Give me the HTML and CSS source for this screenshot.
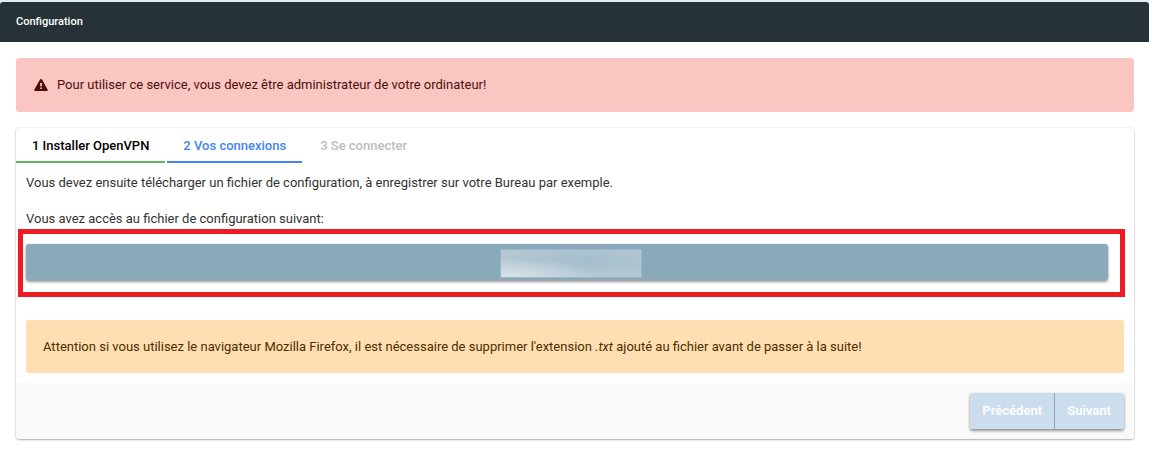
FILE: index.html
```html
<!DOCTYPE html>
<html lang="fr">
<head>
    <meta charset="utf-8">
    <meta name="viewport" content="width=device-width, initial-scale=1">
    <title>Configuration</title>
    <link rel="stylesheet" href="styles.css">
</head>
<body>
<div class="panel">
    <h1 class="panel-header">Configuration</h1>
    <div class="panel-body">
        <div class="alert alert-danger">
            <svg class="alert-icon" viewBox="0 0 14 12" aria-hidden="true">
                <path fill="currentColor" fill-rule="evenodd" d="M7 0c.5 0 .8.2 1 .6l5.6 9.8c.4.8 0 1.6-.9 1.6H1.300c-.9 0-1.300-.8-.9-1.600L6 .6C6.200.2 6.500 0 7 0zM6 4l.3 3.500h1.400L8 4zM6.200 8.500v1.600h1.600V8.500z"/>
            </svg>
            <span>Pour utiliser ce service, vous devez être administrateur de votre ordinateur!</span>
        </div>
        <div class="wizard">
            <nav class="steps">
                <a class="step done" href="#installer">1 Installer OpenVPN</a>
                <a class="step active" href="#connexions">2 Vos connexions</a>
                <a class="step" href="#connecter">3 Se connecter</a>
            </nav>
            <div class="wizard-content" id="connexions">
                <p>Vous devez ensuite télécharger un fichier de configuration, à enregistrer sur votre Bureau par exemple.</p>
                <p>Vous avez accès au fichier de configuration suivant:</p>
                <div class="highlight">
                    <button class="btn btn-file" type="button" aria-label="Fichier de configuration"><span class="masked"></span></button>
                </div>
                <div class="alert alert-warning">
                    <span>Attention si vous utilisez le navigateur Mozilla Firefox, il est nécessaire de supprimer l'extension <em>.txt</em> ajouté au fichier avant de passer à la suite!</span>
                </div>
            </div>
            <div class="wizard-footer">
                <div class="btn-group">
                    <button class="btn btn-nav" type="button" disabled>Précédent</button>
                    <button class="btn btn-nav" type="button" disabled>Suivant</button>
                </div>
            </div>
        </div>
    </div>
</div>
</body>
</html>
```
FILE: styles.css
```css
*{box-sizing:border-box;}
body{
    margin: 0;
    padding-top: 2px;
    background: linear-gradient(#e5edf1 8px, #fff 8px);
    font: 13px/18px Roboto, "Liberation Sans", sans-serif;
    color: #333;
}
p{margin: 0 0 18px;}
.panel{
    background: #fff;
    border-radius: 3px 3px 0 0;
}
.panel-header{
    margin: 0;
    padding: 11px 16px;
    background: #263238;
    border-radius: 3px 3px 0 0;
    color: #fff;
    font-size: 11px;
    font-weight: 500;
    line-height: 18px;
}
.panel-body{padding: 16px 15px 14px 16px;}

/* alertes */
.alert{
    display: flex;
    align-items: center;
    border-radius: 3px;
}
.alert-danger{
    gap: 9px;
    margin-bottom: 16px;
    padding: 18px;
    background: #fbc6c2;
    color: #4c0f0b;
}
.alert-icon{
    width: 14px;
    height: 12px;
}
.alert-warning{
    margin-top: 23px;
    padding: 18px 17px 17px;
    background: #ffdfb2;
    color: #4c2d00;
}

/* assistant */
.wizard{
    border-radius: 3px;
    box-shadow: 0 1px 2px rgba(0,0,0,.3), 0 0 2px rgba(0,0,0,.12);
}
.steps{
    display: flex;
    gap: 2px;
}
.step{
    padding: 9px 16px 6px;
    border-bottom: 2px solid transparent;
    color: #bdbdbd;
    font-weight: 500;
    text-decoration: none;
}
.step.done{
    border-color: #5cb85c;
    color: #000;
}
.step.active{
    border-color: #4285f4;
    color: #4285f4;
}
.wizard-content{padding: 11px 10px 10px;}
.wizard-content p:nth-child(2){margin-bottom: 1px;}
.highlight{
    margin: 0 -1px 0 -8px;
    padding: 10px 12px 12px 3px;
    border: 5px solid #ed1c24;
}
.btn{
    border: 0;
    font: inherit;
}
.btn-file,
.btn-group{
    border-radius: 3px;
    box-shadow: 0 2px 3px rgba(0,0,0,.4), 0 0 2px rgba(0,0,0,.12);
}
.btn-file{
    display: flex;
    justify-content: center;
    width: 100%;
    padding: 5px 0 2px 8px;
    background: #8aaabb;
}
.masked{
    width: 142px;
    height: 29px;
    border: 1px solid #9bb6c4;
    background: radial-gradient(ellipse at 0 100%, #dae4e8, transparent 50%), radial-gradient(ellipse at 60% 40%, #a5bdcc, #b9ccd5);
}
.wizard-footer{
    display: flex;
    justify-content: flex-end;
    padding: 10px;
    background: #f9f9f9;
    border-radius: 0 0 3px 3px;
}
.btn-group{display: flex;}
.btn-nav{
    padding: 9px 13px 9px 12px;
    background: #ccddee;
    color: #fbfcfe;
    font-weight: 700;
}
.btn-nav:first-child{
    border-radius: 3px 0 0 3px;
    padding-right: 12px;
}
.btn-nav:last-child{
    border-left: 1px solid #92a4b4;
    border-radius: 0 3px 3px 0;
}
```
